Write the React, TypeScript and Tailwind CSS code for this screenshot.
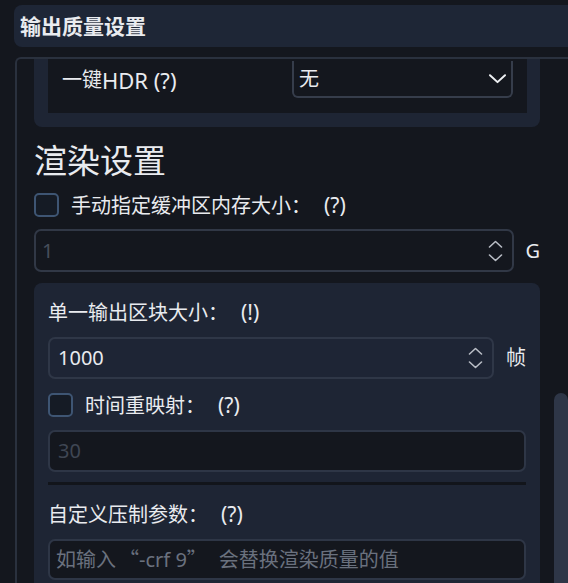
import React from "react";

const Chevron = ({ up = false, className = "" }: { up?: boolean; className?: string }) => (
  <svg viewBox="0 0 14 8" className={className} fill="none" stroke="currentColor" strokeWidth="1.6" strokeLinecap="round" strokeLinejoin="round">
    {up ? <path d="M1 7 L7 1.5 L13 7" /> : <path d="M1 1 L7 6.5 L13 1" />}
  </svg>
);

const Spinner = () => (
  <div className="flex flex-col items-center gap-[6px] text-[#b9bdc5]">
    <Chevron up className="w-[15px] h-[8px]" />
    <Chevron className="w-[15px] h-[8px]" />
  </div>
);

const Checkbox = () => (
  <div className="w-[25px] h-[24px] rounded-[5px] border-2 border-[#3e5573] bg-[#151b25] shrink-0" />
);

const Label = ({ text, tail }: { text: string; tail: string }) => (
  <span className="whitespace-nowrap">
    {text}
    <span className="inline-block w-[20px] font-['Noto_Sans_CJK_SC',sans-serif]">：</span>
    <span className="ml-[13px] text-[21px]">{tail}</span>
  </span>
);

export default function App() {
  return (
    <div
      lang="zh-CN"
      className="w-[568px] h-[583px] bg-[#14171e] overflow-hidden relative text-[#e9ebef] font-['Noto_Sans','Noto_Sans_CJK_SC',sans-serif] text-[20px] leading-none [text-spacing-trim:space-all]"
    >
      {/* header */}
      <div className="ml-[14px] mt-[5px] h-[42px] rounded-l-[8px] bg-[#1e2636] flex items-center pl-[6px]">
        <span className="font-bold text-[21px]">输出质量设置</span>
      </div>

      {/* outer panel */}
      <div className="ml-[15px] mt-[10px] h-[600px] border-l-2 border-t-2 border-[#2a313e] rounded-tl-[6px] pl-[17px] pr-[11px]">
        <div className="w-[506px]">
          {/* HDR group (scrolled) */}
          <div className="bg-[#1e2534] rounded-b-[8px] pl-[14px] pr-[13px] pb-[14px]">
            <div className="bg-[#14171e] h-[54px] pt-[2px] pl-[14px] pr-[14px] flex items-start">
              <div className="w-[230px] h-[37px] flex items-center whitespace-nowrap">
                一键<span className="text-[22px]">HDR (?)</span>
              </div>
              <div className="flex-1 h-[37px] border-2 border-[#363d4b] border-t-0 rounded-b-[6px] flex items-center justify-between pl-[5px] pr-[4px]">
                <span>无</span>
                <Chevron className="w-[19px] h-[10px] text-[#eef0f3]" />
              </div>
            </div>
          </div>

          {/* heading */}
          <div className="mt-[13px] h-[40px] flex items-center text-[33px]">渲染设置</div>

          {/* checkbox row */}
          <div className="mt-[13px] flex items-center gap-[12px] h-[24px]">
            <Checkbox />
            <Label text="手动指定缓冲区内存大小" tail="(?)" />
          </div>

          {/* input G */}
          <div className="mt-[12px] flex items-center">
            <div className="w-[481px] h-[43px] rounded-[7px] border-2 border-[#313846] flex items-center justify-between pl-[6px] pr-[9px]">
              <span className="text-[#474e5b]">1</span>
              <Spinner />
            </div>
            <span className="ml-[11px]">G</span>
          </div>

          {/* group 2 */}
          <div className="mt-[11px] bg-[#1e2534] rounded-t-[8px] pl-[14px] pr-[14px] pt-[20px] h-[320px]">
            <div className="h-[19px] flex items-center">
              <Label text="单一输出区块大小" tail="(!)" />
            </div>

            <div className="mt-[15px] flex items-center">
              <div className="w-[448px] h-[42px] rounded-[7px] border-2 border-[#2f3747] bg-[#1e2535] flex items-center justify-between pl-[8px] pr-[9px]">
                <span>1000</span>
                <Spinner />
              </div>
              <span className="ml-[12px]">帧</span>
            </div>

            <div className="mt-[13px] flex items-center gap-[12px] h-[26px]">
              <Checkbox />
              <Label text="时间重映射" tail="(?)" />
            </div>

            <div className="mt-[12px] h-[42px] rounded-[7px] border-2 border-[#2e3646] bg-[#14171e] flex items-center pl-[8px]">
              <span className="text-[#3f4653]">30</span>
            </div>

            <div className="mt-[10px] h-[3px] bg-[#12151b]" />

            <div className="mt-[20px] h-[19px] flex items-center">
              <Label text="自定义压制参数" tail="(?)" />
            </div>

            <div className="mt-[15px] h-[41px] rounded-[7px] border-2 border-[#2e3646] bg-[#14171e] flex items-center pl-[6px]">
              <span className="text-[#6a717e] whitespace-nowrap">
                如输入
                <span className="inline-block w-[20px] ml-[3px] text-right font-['Noto_Sans_CJK_SC',sans-serif]">“</span>
                -crf 9
                <span className="inline-block w-[20px] font-['Noto_Sans_CJK_SC',sans-serif]">”</span>
                <span className="ml-[12px]">会替换渲染质量的值</span>
              </span>
            </div>
          </div>
        </div>
      </div>

      {/* scrollbar thumb */}
      <div className="absolute left-[554px] top-[393px] w-[14px] h-[200px] rounded-t-[7px] bg-[#2e3647]" />
    </div>
  );
}
